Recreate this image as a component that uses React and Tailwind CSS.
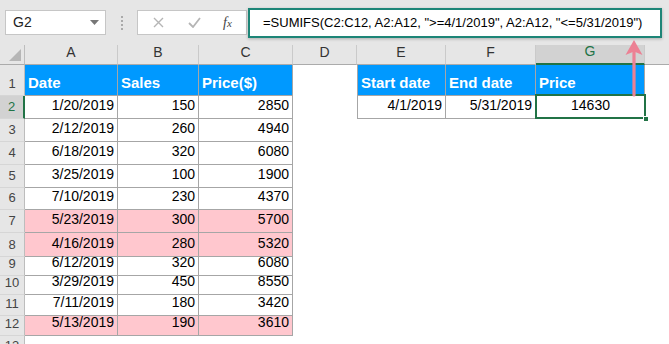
import React from 'react';

const rows = [
  { d: '1/20/2019', s: 150, p: 2850 },
  { d: '2/12/2019', s: 260, p: 4940 },
  { d: '6/18/2019', s: 320, p: 6080 },
  { d: '3/25/2019', s: 100, p: 1900 },
  { d: '7/10/2019', s: 230, p: 4370 },
  { d: '5/23/2019', s: 300, p: 5700, hit: true },
  { d: '4/16/2019', s: 280, p: 5320, hit: true },
  { d: '6/12/2019', s: 320, p: 6080 },
  { d: '3/29/2019', s: 450, p: 8550 },
  { d: '7/11/2019', s: 180, p: 3420 },
  { d: '5/13/2019', s: 190, p: 3610, hit: true },
];

const colHead = 'bg-[#e6e6e6] border-r border-b border-r-[#cacaca] border-b-[#ababab] flex items-end justify-center pb-[1px] text-[14px] text-[#333]';
const rowHead = 'bg-[#e6e6e6] border-r border-b border-r-[#bdbdbd] border-b-[#d6d6d6] flex items-end justify-center pb-[2px] text-[13px] text-[#444]';
const blue = 'bg-[#0099ff] border-r border-b border-[#a6a6a6] flex items-end pl-[3px] pb-[1px] text-[15px] font-bold text-white';
const num = 'border-r border-b border-[#a6a6a6] flex items-end justify-end pr-[3px] pb-[2px] text-[14px] text-black';

const RowHeader = ({ n, active }) => (
  <div
    className={
      active
        ? 'bg-[#d2d2d2] border-r-2 border-b border-r-[#217346] border-b-[#d6d6d6] flex items-end justify-center pb-[2px] text-[13px] text-[#217346]'
        : rowHead
    }
  >
    {n}
  </div>
);

export default function App() {
  return (
    <div className="relative w-[669px] h-[344px] overflow-hidden bg-white font-['Liberation_Sans',Arial,sans-serif]">
      {/* formula toolbar */}
      <div className="h-[45px] bg-[#e6e6e6] flex items-start">
        <div className="ml-[5px] mt-[10px] w-[101px] h-[25px] bg-white border border-[#c6c6c6] flex items-center justify-between pl-[7px] pr-[6px] text-[14px] text-[#222]">
          <span>G2</span>
          <svg width="9" height="5" viewBox="0 0 9 5">
            <path d="M0 0h9L4.5 5z" fill="#777" />
          </svg>
        </div>
        <div className="w-[31px] mt-[16px] flex flex-col items-center gap-[2px]">
          <span className="w-[2px] h-[2px] bg-[#aaa]" />
          <span className="w-[2px] h-[2px] bg-[#aaa]" />
          <span className="w-[2px] h-[2px] bg-[#aaa]" />
          <span className="w-[2px] h-[2px] bg-[#aaa]" />
        </div>
        <div className="mt-[10px] w-[110px] h-[25px] bg-white border border-[#c6c6c6] flex items-center">
          <svg className="ml-[15px]" width="11" height="11" viewBox="0 0 11 11">
            <path d="M1 1l9 9M10 1l-9 9" stroke="#b5b5b5" strokeWidth="1.4" />
          </svg>
          <svg className="ml-[24px]" width="13" height="11" viewBox="0 0 13 11">
            <path d="M1 6l4 4 7-9" stroke="#b5b5b5" strokeWidth="1.8" fill="none" />
          </svg>
          <span className="ml-[22px] text-[14px] italic text-[#444] font-['Liberation_Serif',serif]">
            f<span className="text-[11px]">x</span>
          </span>
        </div>
        <div className="ml-[1px] mt-[8px] w-[414px] h-[30px] bg-white border-2 border-[#1d8577] shadow-[0_1px_3px_rgba(0,0,0,0.25)] flex items-center pl-[13px] text-[13px] text-black whitespace-nowrap">
          =SUMIFS(C2:C12, A2:A12, "&gt;=4/1/2019", A2:A12, "&lt;=5/31/2019")
        </div>
      </div>

      {/* sheet grid */}
      <div className="grid grid-cols-[25px_93px_81px_94px_64px_89px_90px_109px_1fr] grid-rows-[20px_31px_23px_23px_23px_23px_22px_23px_24px_19px_19px_21px_20px_1fr] h-[299px]">
        {/* column headers */}
        <div className="bg-[#e6e6e6] border-r border-b border-r-[#bdbdbd] border-b-[#ababab] relative">
          <svg className="absolute right-[3px] bottom-[3px]" width="12" height="12" viewBox="0 0 12 12">
            <path d="M12 0v12H0z" fill="#b6b6b6" />
          </svg>
        </div>
        {['A', 'B', 'C', 'D', 'E', 'F'].map((c) => (
          <div key={c} className={colHead}>{c}</div>
        ))}
        <div className="bg-[#d2d2d2] border-r border-b-2 border-r-[#cacaca] border-b-[#217346] flex items-end justify-center pb-[1px] text-[14px] text-[#217346]">G</div>
        <div className="bg-[#e6e6e6] border-b border-[#ababab]" />

        {/* row 1 */}
        <RowHeader n={1} />
        <div className={blue}>Date</div>
        <div className={blue}>Sales</div>
        <div className={blue}>Price($)</div>
        <div />
        <div className={`${blue} border-l`}>Start date</div>
        <div className={blue}>End date</div>
        <div className={blue}>Price</div>
        <div />

        {rows.map((r, i) => {
          const bg = r.hit ? 'bg-[#ffc7ce]' : 'bg-white';
          return (
            <React.Fragment key={i}>
              <RowHeader n={i + 2} active={i === 0} />
              <div className={`${num} ${bg}`}>{r.d}</div>
              <div className={`${num} ${bg}`}>{r.s}</div>
              <div className={`${num} ${bg}`}>{r.p}</div>
              <div />
              {i === 0 ? (
                <>
                  <div className={`${num} border-l`}>4/1/2019</div>
                  <div className={num}>5/31/2019</div>
                  <div className="relative border-b border-[#a6a6a6] flex items-end justify-center pb-[2px] text-[14px] text-black">
                    14630
                    <div className="absolute left-[-1px] top-[-2px] right-[-1px] bottom-[-1px] border-2 border-[#217346]" />
                    <div className="absolute right-[-4px] bottom-[-4px] w-[6px] h-[6px] bg-[#217346] border border-white" />
                  </div>
                </>
              ) : (
                <>
                  <div />
                  <div />
                  <div />
                </>
              )}
              <div />
            </React.Fragment>
          );
        })}

        <RowHeader n={13} />
      </div>

      {/* pointer arrow */}
      <svg className="absolute left-[624px] top-[40px]" width="20" height="57" viewBox="0 0 20 57">
        <path d="M10 10V55" stroke="#ec8194" strokeWidth="3.2" strokeLinecap="round" />
        <path d="M10 0L18.5 15L10 11.5L1.5 15Z" fill="#ec8194" />
      </svg>
    </div>
  );
}
